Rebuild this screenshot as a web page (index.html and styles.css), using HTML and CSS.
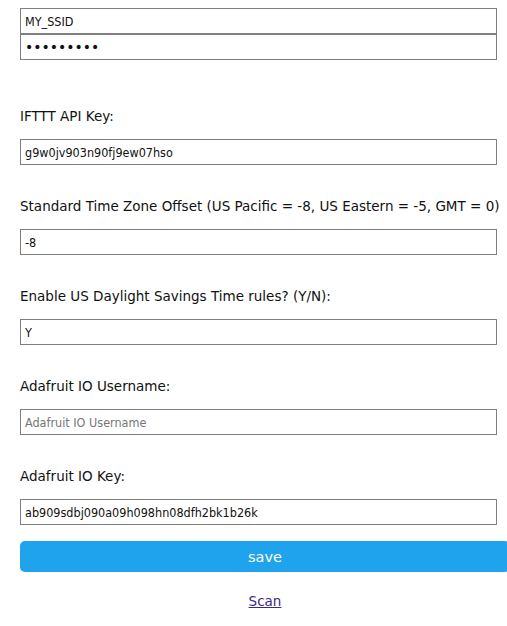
FILE: index.html
```html
<!DOCTYPE html>
<html>
<head>
<meta charset="utf-8">
<link rel="stylesheet" href="styles.css">
</head>
<body>
<div class="wrap">
  <form class="form">
    <div class="creds">
      <input class="field" type="text" value="MY_SSID">
      <input class="field pw" type="password" value="123456789">
    </div>
    <div class="param first">
      <div class="label">IFTTT API Key:</div>
      <input class="field" type="text" value="g9w0jv903n90fj9ew07hso">
    </div>
    <div class="param">
      <div class="label">Standard Time Zone Offset (US Pacific = -8, US Eastern = -5, GMT = 0)</div>
      <input class="field" type="text" value="-8">
    </div>
    <div class="param">
      <div class="label">Enable US Daylight Savings Time rules? (Y/N):</div>
      <input class="field" type="text" value="Y">
    </div>
    <div class="param">
      <div class="label">Adafruit IO Username:</div>
      <input class="field" type="text" placeholder="Adafruit IO Username">
    </div>
    <div class="param">
      <div class="label">Adafruit IO Key:</div>
      <input class="field" type="text" value="ab909sdbj090a09h098hn08dfh2bk1b26k">
    </div>
    <button class="save" type="button">save</button>
  </form>
  <div class="scan"><a href="#" class="scan-link">Scan</a></div>
</div>
</body>
</html>
```
FILE: styles.css
```css
html, body {
  overflow: hidden;
}
body {
  margin: 0;
  background: #fff;
  font-family: "DejaVu Sans", Verdana, sans-serif;
  font-size: 13.5px;
  color: #111;
}
.wrap {
  width: 490px;
  padding: 8px 0 0 20px;
}
.form {
  display: flex;
  flex-direction: column;
}
.creds {
  display: flex;
  flex-direction: column;
}
.field {
  box-sizing: border-box;
  width: 477px;
  height: 26px;
  margin: 0;
  padding: 0 4px;
  border: 1px solid #7f7f7f;
  border-radius: 0;
  font-family: "DejaVu Sans Condensed", "DejaVu Sans", Verdana, sans-serif;
  font-size: 12.5px;
  color: #111;
  outline: none;
  background: #fff;
}
.pw {
  font-family: "DejaVu Sans", Verdana, sans-serif;
  font-size: 14px;
}
.field::placeholder {
  color: #767676;
}
.param {
  display: flex;
  flex-direction: column;
  padding-top: 33px;
}
.param.first {
  padding-top: 48px;
}
.label {
  line-height: 16px;
  margin-bottom: 15px;
}
.save {
  margin-top: 16px;
  width: 490px;
  height: 31px;
  border: 0;
  border-radius: 5px;
  background: #1fa3ec;
  color: #fff;
  font-family: "DejaVu Sans", Verdana, sans-serif;
  font-size: 14.5px;
  padding: 0;
}
.scan {
  text-align: center;
  margin-top: 20px;
  line-height: 18px;
  font-size: 13.5px;
}
.scan-link {
  color: #3b2a85;
}
```
